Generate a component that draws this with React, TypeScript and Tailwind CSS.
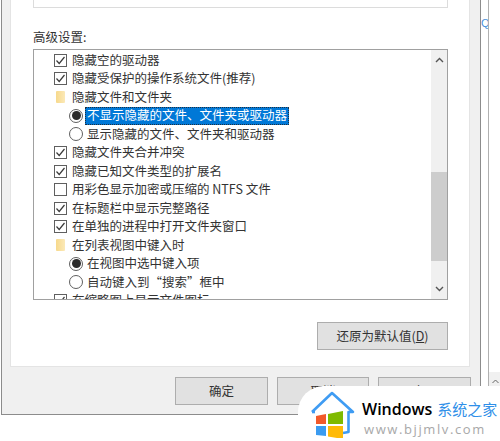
import React from "react";

type Row = {
    kind: "check" | "radio" | "folder";
    label: string;
    on?: boolean;
    selected?: boolean;
};

const rows: Row[] = [
    {kind: "check", label: "隐藏空的驱动器", on: true},
    {kind: "check", label: "隐藏受保护的操作系统文件(推荐)", on: true},
    {kind: "folder", label: "隐藏文件和文件夹"},
    {kind: "radio", label: "不显示隐藏的文件、文件夹或驱动器", on: true, selected: true},
    {kind: "radio", label: "显示隐藏的文件、文件夹和驱动器"},
    {kind: "check", label: "隐藏文件夹合并冲突", on: true},
    {kind: "check", label: "隐藏已知文件类型的扩展名", on: true},
    {kind: "check", label: "用彩色显示加密或压缩的 NTFS 文件"},
    {kind: "check", label: "在标题栏中显示完整路径", on: true},
    {kind: "check", label: "在单独的进程中打开文件夹窗口", on: true},
    {kind: "folder", label: "在列表视图中键入时"},
    {kind: "radio", label: "在视图中选中键入项", on: true},
    {kind: "radio", label: "自动键入到“搜索”框中"},
    {kind: "check", label: "在缩略图上显示文件图标", on: true},
];

const Check = ({on}: {on?: boolean}) => (
    <span className="w-[13px] h-[13px] border border-[#5f5f5f] bg-white flex items-center justify-center shrink-0">
        {on && (
            <svg width="11" height="11" viewBox="0 0 11 11" fill="none">
                <path d="M1.5 5.5 L4.2 8.5 L9.5 2" stroke="#3a3a3a" strokeWidth="1.2"/>
            </svg>
        )}
    </span>
);

const Radio = ({on}: {on?: boolean}) => (
    <span className="w-[14px] h-[14px] rounded-full border border-[#5f5f5f] bg-white flex items-center justify-center shrink-0">
        {on && <span className="w-[9px] h-[9px] rounded-full bg-[#2b2b2b]"/>}
    </span>
);

const Folder = () => (
    <span className="w-[9px] h-[12px] rounded-[1px] bg-gradient-to-r from-[#f7d98b] to-[#fbe9b8] shrink-0"/>
);

const ListRow = ({row}: {row: Row}) => {
    if (row.kind === "radio") {
        return (
            <div className="h-[18.5px] shrink-0 flex items-center pl-[35px]">
                <Radio on={row.on}/>
                <span
                    className={`ml-[2px] px-[2px] h-[18px] flex items-center whitespace-nowrap ${
                        row.selected ? "bg-[#0078d7] text-white outline-1 outline-dotted outline-[#1f2f3f] -outline-offset-1" : ""
                    }`}
                >
                    {row.label}
                </span>
            </div>
        );
    }
    return (
        <div className="h-[18.5px] shrink-0 flex items-center pl-[20px]">
            {row.kind === "check" ? <Check on={row.on}/> : <span className="w-[13px] flex justify-center"><Folder/></span>}
            <span className="ml-[5px] whitespace-nowrap">{row.label}</span>
        </div>
    );
};

const Button = ({label, width}: {label: React.ReactNode; width: string}) => (
    <div className={`${width} h-[28px] bg-[#e1e1e1] border border-[#adadad] flex items-center justify-center text-[12.5px] text-[#333]`}>
        {label}
    </div>
);

const Watermark = () => (
    <div className="absolute left-[298px] top-[386px] w-[202px] h-[55px] bg-white rounded-tl-[26px] flex">
        <svg className="ml-[12px] mt-[4px] shrink-0" width="46" height="48" viewBox="0 0 46 48" fill="none">
            <path d="M2 22 L22 3 L43 22 L38.5 22 L38.5 42 L33 43" stroke="#3f9cf3" strokeWidth="2.6" strokeLinejoin="round"/>
            <path d="M2 22 L5 22" stroke="#3f9cf3" strokeWidth="2.6"/>
            <path d="M6 26 L16 24 L16 34 L6 34 Z" fill="#f2592a"/>
            <path d="M18 24 L33 21 L33 34 L18 34 Z" fill="#7fba00"/>
            <path d="M6 36 L16 36 L16 46 L6 45 Z" fill="#3a9bf0"/>
            <path d="M18 36 L33 36 L33 49 L18 46.5 Z" fill="#ffba08"/>
        </svg>
        <div className="ml-[6px] flex flex-col pt-[12px]">
            <div className="flex items-center h-[22px] whitespace-nowrap">
                <span className="text-[16px] font-semibold text-black font-['Open_Sans',sans-serif]">Windows</span>
                <span className="ml-[5px] text-[15px] text-[#2f8fe8]">系统之家</span>
            </div>
            <div className="ml-[2px] text-[13px] leading-[18px] tracking-[1.6px] text-[#a8a8a8] font-['Open_Sans',sans-serif] whitespace-nowrap">
                www.bjjmlv.com
            </div>
        </div>
    </div>
);

export default function App() {
    return (
        <div className="relative w-[500px] h-[441px] overflow-hidden bg-white pl-[1px] flex font-['Noto_Sans_CJK_SC','Liberation_Sans',sans-serif] text-[12.5px] text-[#333]">
            <div className="w-[480px] h-[415px] bg-[#f0f0f0] border-x border-b border-[#8c8c8c] flex flex-col shrink-0">
                <div className="ml-[8px] mr-[10px] h-[367px] shrink-0 bg-white border-l border-r border-b border-[#e4e4e4] pl-[22px] pr-[21px]">
                    <div className="h-[8px] border-x border-b border-[#dcdcdc]"/>
                    <div className="h-[19px] mt-[20px] flex items-center">高级设置:</div>
                    <div className="mt-[2px] h-[251px] border border-[#a0a0a0] flex overflow-hidden">
                        <div className="flex-1 flex flex-col pt-[1px] overflow-hidden">
                            {rows.map((row) => (
                                <ListRow key={row.label} row={row}/>
                            ))}
                        </div>
                        <div className="w-[16px] bg-[#f0f0f0] flex flex-col items-center shrink-0">
                            <svg className="mt-[7px]" width="9" height="6" viewBox="0 0 9 6" fill="none">
                                <path d="M1 5 L4.5 1.5 L8 5" stroke="#555" strokeWidth="1.4"/>
                            </svg>
                            <div className="mt-[109px] w-full h-[89px] bg-[#cdcdcd]"/>
                            <svg className="mt-[25px]" width="9" height="6" viewBox="0 0 9 6" fill="none">
                                <path d="M1 1 L4.5 4.5 L8 1" stroke="#555" strokeWidth="1.4"/>
                            </svg>
                        </div>
                    </div>
                    <div className="mt-[22px] flex justify-end">
                        <Button width="w-[131px]" label={<span>还原为默认值(<span className="underline">D</span>)</span>}/>
                    </div>
                </div>
                <div className="flex justify-end gap-[9px] pt-[10px] pr-[9px]">
                    <Button width="w-[93px]" label="确定"/>
                    <Button width="w-[92px]" label="取消"/>
                    <Button width="w-[93px]" label="应用"/>
                </div>
            </div>
            <div className="w-[7px] shrink-0 pt-[16px] text-[11px] leading-[14px] text-[#4a90d9] overflow-hidden font-['Liberation_Sans',sans-serif]">Q</div>
            <div className="flex-1 flex flex-col border-l border-[#b0b0b0]">
                <div className="h-[372px]"/>
                <div className="flex-1 bg-[#f0f0f0] flex justify-end pr-[1px] pt-[7px]">
                    <svg width="7" height="5" viewBox="0 0 7 5" fill="none">
                        <path d="M0.5 4 L3.5 1 L6.5 4" stroke="#666" strokeWidth="1"/>
                    </svg>
                </div>
            </div>
            <Watermark/>
        </div>
    );
}
